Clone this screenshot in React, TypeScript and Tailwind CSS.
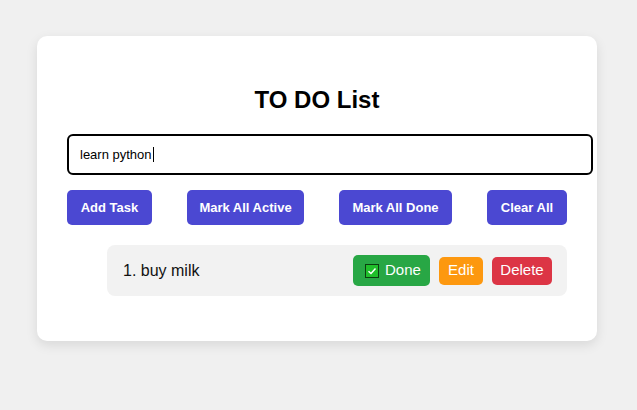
export default function App() {
  const font = { fontFamily: '"Liberation Sans", Arial, sans-serif' };

  return (
    <div className="min-h-screen w-full bg-[#f0f0f0] pt-[36px]" style={font}>
      {/* Card */}
      <div className="ml-[37px] w-[560px] rounded-[10px] bg-white px-[30px] pt-[50px] pb-[45px] shadow-[0_4px_12px_rgba(0,0,0,0.1)]">
        {/* Title */}
        <h2 className="text-center text-[24px] font-bold leading-[28px] text-black">TO DO List</h2>

        {/* Input */}
        <div className="mt-[20px] flex h-[41px] w-[526px] items-center rounded-[6px] border-2 border-black bg-white px-[11px] text-[13px] text-black">
          <span>learn python</span>
          <span className="ml-px inline-block h-[15px] w-px bg-black"></span>
        </div>

        {/* Action buttons */}
        <div className="mt-[15px] flex justify-between">
          <button className="h-[35px] w-[85px] rounded-[5px] bg-[#4b48d2] text-[13px] font-bold text-white">Add Task</button>
          <button className="h-[35px] w-[117px] rounded-[5px] bg-[#4b48d2] text-[13px] font-bold text-white">Mark All Active</button>
          <button className="h-[35px] w-[113px] rounded-[5px] bg-[#4b48d2] text-[13px] font-bold text-white">Mark All Done</button>
          <button className="h-[35px] w-[80px] rounded-[5px] bg-[#4b48d2] text-[13px] font-bold text-white">Clear All</button>
        </div>

        {/* Task list */}
        <ul className="mt-[20px] pl-[40px]">
          <li className="flex h-[51px] items-center justify-between rounded-[8px] bg-[#f2f2f2] pl-[16px] pr-[15px]">
            <span className="text-[16px] text-[#111]">1. buy milk</span>
            <div className="flex items-center gap-[9px]">
              <button className="flex h-[31px] w-[77px] items-center gap-[6px] rounded-[5px] bg-[#28a745] pl-[12px] text-[15px] text-white">
                <svg width="14" height="14" viewBox="0 0 14 14">
                  <rect x="0.5" y="0.5" width="13" height="13" fill="#1fbf2a" stroke="#0b3d10" />
                  <path d="M3.5 7.2 L6 9.5 L10.5 4.5" fill="none" stroke="#fff" strokeWidth="1.5" />
                </svg>
                Done
              </button>
              <button className="h-[28px] w-[44px] rounded-[5px] bg-[#fd980f] text-[15px] text-white">Edit</button>
              <button className="h-[28px] w-[60px] rounded-[5px] bg-[#dc3545] text-[15px] text-white">Delete</button>
            </div>
          </li>
        </ul>
      </div>
    </div>
  );
}
